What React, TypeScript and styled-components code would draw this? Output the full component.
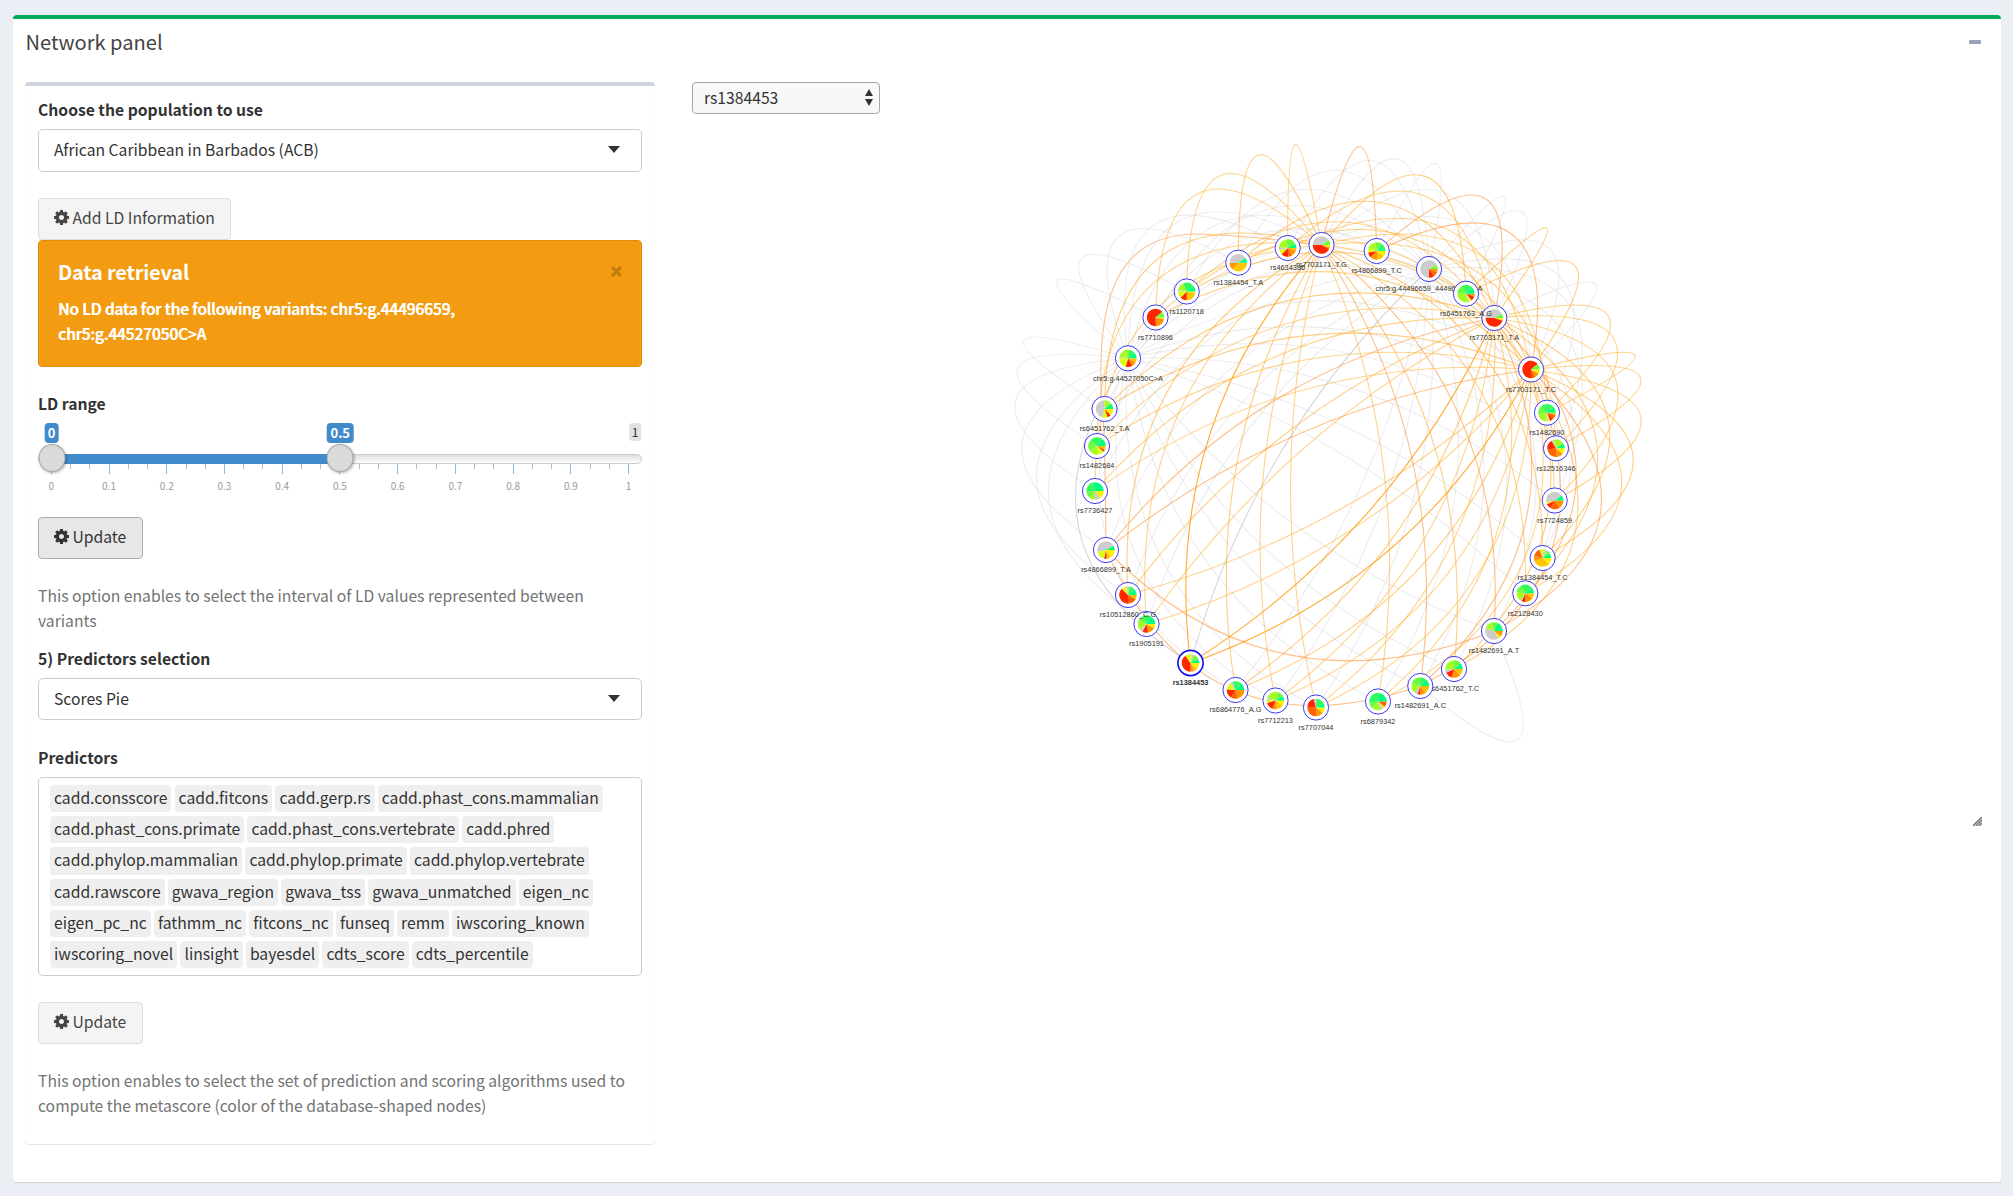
import React from "react";
import styled, { createGlobalStyle } from "styled-components";

const GlobalStyle = createGlobalStyle`
  *, *::before, *::after { box-sizing: border-box; }
  body {
    margin: 0;
    background: #ebeef4;
    color: #333;
    font-family: "Noto Sans CJK SC", "Noto Sans", sans-serif;
    font-size: 15.7px;
    line-height: 25px;
  }
`;

const Page = styled.main`
  height: 1196px;
  padding: 15px 12px 14px 13px;
`;

const Box = styled.section`
  height: 1167px;
  background: #fff;
  border-top: 4px solid #00a95c;
  border-radius: 4px;
  box-shadow: 0 1px 1px rgba(0, 0, 0, 0.12);
`;

const BoxHeader = styled.header`
  display: flex;
  justify-content: space-between;
  height: 63px;
  padding: 10px 20px 0 12.5px;
`;

const BoxTitle = styled.h3`
  margin: 0;
  font-size: 20.1px;
  font-weight: 400;
  line-height: 26px;
  color: #444;
`;

const CollapseMark = styled.span`
  width: 12px;
  height: 4px;
  margin-top: 11px;
  border-radius: 1px;
  background: #9aa1b9;
`;

const BoxBody = styled.div`
  display: flex;
  gap: 37px;
  padding: 0 19px 0 12px;
`;

const Sidebar = styled.aside`
  width: 630px;
  height: 1062px;
  padding: 11px 13px 0;
  border-top: 4px solid #d1d5df;
  border-radius: 4px;
  box-shadow: 0 1px 1px rgba(0, 0, 0, 0.1), 0 0 1px rgba(0, 0, 0, 0.08);
`;

const FieldLabel = styled.label<{ $top?: number }>`
  display: block;
  height: 25px;
  margin-top: ${(p) => p.$top ?? 0}px;
  font-weight: 700;
`;

const SelectBox = styled.div<{ $height?: number }>`
  display: flex;
  align-items: center;
  justify-content: space-between;
  height: ${(p) => p.$height ?? 43}px;
  margin-top: 7px;
  padding: 0 21px 2px 15px;
  border: 1px solid #ccc;
  border-radius: 5px;
`;

const Caret = styled.span`
  border: solid transparent;
  border-width: 7px 6.5px 0;
  border-top-color: #333;
`;

const Button = styled.button<{ $top: number; $pressed?: boolean }>`
  display: flex;
  align-items: center;
  gap: 3.5px;
  height: 42px;
  margin: ${(p) => p.$top}px 0 0;
  padding: 0 15.5px 3px 15px;
  border: 1px solid ${(p) => (p.$pressed ? "#adadad" : "#ddd")};
  border-radius: 4px;
  background: ${(p) => (p.$pressed ? "#e7e7e7" : "#f4f4f4")};
  color: ${(p) => (p.$pressed ? "#333" : "#444")};
  font: inherit;
`;

const Alert = styled.div`
  height: 127px;
  padding: 17px 18px 17px 19px;
  border: 1px solid #e08e0b;
  border-radius: 4px;
  background: #f39c12;
  color: #fff;
`;

const AlertHead = styled.div`
  display: flex;
  justify-content: space-between;
  height: 38px;
`;

const AlertTitle = styled.h4`
  margin: 0;
  font-size: 20px;
  font-weight: 700;
  line-height: 28px;
  letter-spacing: -0.2px;
`;

const AlertText = styled.p`
  margin: 0;
  width: 430px;
  font-weight: 500;
  font-size: 15.6px;
  letter-spacing: -0.17px;
  text-shadow: 0.5px 0 #fff;
`;

const Slider = styled.div`
  position: relative;
  height: 76px;
  margin-top: 7px;
`;

const SliderTrack = styled.div`
  position: absolute;
  top: 31px;
  left: 0;
  right: 0;
  height: 10px;
  border: 1px solid #ccc;
  border-radius: 6px;
  background: linear-gradient(#dedede, #fff);
`;

const SliderBar = styled.div`
  position: absolute;
  top: 31px;
  left: 13px;
  width: 289px;
  height: 10px;
  background: #428bca;
`;

const SliderHandle = styled.span`
  position: absolute;
  top: 21px;
  width: 27px;
  height: 28px;
  transform: translateX(-50%);
  border: 1px solid #aaa;
  border-radius: 50%;
  background: #dadada;
  box-shadow: 1px 1px 3px rgba(0, 0, 0, 0.3);
`;

const SliderValue = styled.span<{ $muted?: boolean }>`
  position: absolute;
  top: 0;
  height: ${(p) => (p.$muted ? 18 : 20)}px;
  padding: 0 ${(p) => (p.$muted ? 2.5 : 3.5)}px;
  transform: translateX(-50%);
  border-radius: 4px;
  background: ${(p) => (p.$muted ? "#e1e1e1" : "#428bca")};
  color: ${(p) => (p.$muted ? "#333" : "#fff")};
  font-size: ${(p) => (p.$muted ? 12 : 13)}px;
  font-weight: ${(p) => (p.$muted ? 400 : 700)};
  line-height: ${(p) => (p.$muted ? 18 : 20)}px;
`;

const Tick = styled.span<{ $major: boolean }>`
  position: absolute;
  top: 41px;
  width: 1px;
  height: ${(p) => (p.$major ? 10 : 5)}px;
  background: ${(p) => (p.$major ? "#8db9de" : "#bbb")};
`;

const TickText = styled.span`
  position: absolute;
  top: 56px;
  transform: translateX(-50%);
  color: #999;
  font-size: 10px;
  line-height: 14px;
`;

const Help = styled.p<{ $top: number }>`
  margin: ${(p) => p.$top}px 0 0;
  color: #737373;
`;

const Tags = styled.div`
  display: flex;
  flex-wrap: wrap;
  align-content: flex-start;
  gap: 4px 3.2px;
  height: 199px;
  margin-top: 7px;
  padding: 7px 11px;
  border: 1px solid #ccc;
  border-radius: 5px;
`;

const Tag = styled.span`
  height: 27.2px;
  padding: 0 4px;
  border-radius: 4px;
  background: #efefef;
  line-height: 26px;
`;

const Network = styled.div`
  flex: 1;
  display: flex;
  flex-direction: column;
`;

const NativeSelect = styled.div`
  display: flex;
  align-items: center;
  justify-content: space-between;
  width: 188px;
  height: 32px;
  padding: 0 6px 1px 11px;
  border: 1px solid #a6a6a6;
  border-radius: 4px;
  background: #f8f8f8;
`;

const Canvas = styled.div`
  display: flex;
  align-items: flex-end;
  width: 1290px;
  height: 712px;
`;

const Graph = styled.svg`
  flex: none;
  width: 1281px;
  height: 712px;
  font-family: "Liberation Sans", Arial, sans-serif;
`;

const CrossIcon = styled.svg`
  margin-top: 7px;
`;

const COG =
  "M1024 896q0 106-75 181t-181 75-181-75-75-181 75-181 181-75 181 75 75 181zm512-109v222q0 12-8 23t-20 13l-185 28q-19 54-39 91 35 50 107 138 10 12 10 25t-9 23q-27 37-99 108t-94 71q-12 0-26-9l-138-108q-44 23-91 38-16 136-29 186-7 28-36 28h-222q-14 0-24.5-8.5t-11.5-21.5l-28-184q-49-16-90-37l-141 107q-10 9-25 9-14 0-25-11-126-114-165-168-7-10-7-23 0-12 8-23 15-21 51-66.5t54-70.5q-27-50-41-99l-183-27q-13-2-21-12.5t-8-23.5v-222q0-12 8-23t19-13l186-28q14-46 39-92-40-57-107-138-10-12-10-24 0-10 9-23 26-36 98.5-107.5t94.5-71.5q13 0 26 10l138 107q44-23 91-38 16-136 29-186 7-28 36-28h222q14 0 24.5 8.5t11.5 21.5l28 184q49 16 90 37l142-107q9-9 24-9 13 0 25 10 129 119 165 170 7 8 7 22 0 12-8 23-15 21-51 66.5t-54 70.5q26 50 41 98l183 28q13 2 21 12.5t8 23.5z";

const Cog = () => (
  <svg width="15" height="15" viewBox="0 128 1536 1536" fill="currentColor" fillRule="evenodd">
    <path d={COG} />
  </svg>
);

const Cross = () => (
  <CrossIcon width="13" height="13" viewBox="0 0 12 12">
    <path d="M2 1.8l8 8.4M10 1.8l-8 8.4" stroke="#c27d0e" strokeWidth="3" />
  </CrossIcon>
);

/* Pie slices run clockwise from three o'clock; each letter is a colour, each number degrees. */
const PALETTE: Record<string, string> = {
  y: "#ffee00",
  a: "#ffc400",
  o: "#ff9500",
  d: "#ff6200",
  r: "#ff2600",
  x: "#cccccc",
  Y: "#d8ff14",
  l: "#a4fb26",
  g: "#6dfc3d",
  G: "#33fb5c",
  e: "#00ff80",
};

type GraphNode = { id: string; x: number; y: number; pie: string };

const nodes: GraphNode[] = [
  { id: "rs4634386", x: 1287.7, y: 248, pie: "a15 o45 d25 r50 Y30 x20 l75 g70 e30" },
  { id: "rs7703171_T.G", x: 1321.5, y: 245, pie: "y15 o15 r150 x145 g35" },
  { id: "rs4866899_T.C", x: 1376.7, y: 251, pie: "y40 a45 o50 r35 Y30 l60 g40 G45 e15" },
  { id: "chr5:g.44496659_44496660C>A", x: 1429, y: 269, pie: "o20 d35 r37 x238 g30" },
  { id: "rs7703171_T.A", x: 1494.3, y: 318, pie: "y18 r162 x150 g30" },
  { id: "rs6451763_A.G", x: 1466, y: 293.7, pie: "o20 r30 Y20 x10 l100 g60 G75 e45" },
  { id: "rs7703171_T.C", x: 1531, y: 369.5, pie: "y30 o30 d30 r230 g40" },
  { id: "rs1482690", x: 1547, y: 412.7, pie: "a15 d30 r25 Y15 x10 l75 g55 G95 e40" },
  { id: "rs12516346", x: 1556, y: 448.3, pie: "y40 o45 d85 r70 x12 l75 e33" },
  { id: "rs7724859", x: 1554.7, y: 500.5, pie: "o55 d65 r35 Y15 x155 e35" },
  { id: "rs1384454_T.C", x: 1542.6, y: 558, pie: "y45 a115 o35 d55 Y30 x25 g25 e30" },
  { id: "rs2128430", x: 1525.3, y: 593.3, pie: "a35 o55 r25 x8 l67 g50 G85 e35" },
  { id: "rs1482691_A.T", x: 1494, y: 631, pie: "o40 y20 x140 l55 g40 e65" },
  { id: "rs6451762_T.C", x: 1454, y: 669, pie: "a45 o60 r50 x20 l95 g50 e40" },
  { id: "rs1482691_A.C", x: 1420.3, y: 686, pie: "a50 o40 r18 x22 l65 g75 G45 e45" },
  { id: "rs6879342", x: 1378, y: 701.5, pie: "d40 y12 x20 l60 g38 G110 e80" },
  { id: "rs7707044", x: 1316, y: 707.5, pie: "y40 o50 d95 r70 x18 G60 e27" },
  { id: "rs7712213", x: 1275.5, y: 700.5, pie: "y35 a45 o30 r55 Y20 x12 l88 g45 e30" },
  { id: "rs6864776_A.G", x: 1235.5, y: 690, pie: "o75 d45 r65 Y45 x20 G60 e50" },
  { id: "rs1384453", x: 1190.5, y: 663, pie: "y40 a25 o25 r145 Y45 x15 g35 e30" },
  { id: "rs1905191", x: 1146.5, y: 624, pie: "y30 o50 r38 x22 l60 g40 G60 e60" },
  { id: "rs10512860_C.G", x: 1128, y: 595, pie: "a30 d60 r135 Y35 x20 G40 e40" },
  { id: "rs4866899_T.A", x: 1106, y: 550, pie: "y60 a25 r18 Y65 x162 e30" },
  { id: "rs7736427", x: 1095, y: 491, pie: "y55 x35 l40 g45 G80 e105" },
  { id: "rs1482684", x: 1097, y: 446, pie: "a28 r14 Y48 l55 g75 G85 e55" },
  { id: "rs6451762_T.A", x: 1104.5, y: 409, pie: "y45 r25 Y35 x165 l50 e40" },
  { id: "chr5:g.44527050C>A", x: 1128, y: 358.3, pie: "a30 o30 r45 Y75 x10 l85 G45 e40" },
  { id: "rs7710896", x: 1155.5, y: 317.5, pie: "y12 o75 r233 g40" },
  { id: "rs1120718", x: 1186.7, y: 291.5, pie: "y15 a75 r45 Y45 x10 l55 G75 e40" },
  { id: "rs1384454_T.A", x: 1238.3, y: 262.7, pie: "a130 o50 x148 e32" },
];

const byId = Object.fromEntries(nodes.map((n) => [n.id, n]));
const variant = (id: string) => id.split("_")[0];
const isChr = (id: string) => id.startsWith("chr");
const SELECTED = "rs1384453";
const ldHubs = ["rs7703171_T.G", "rs7703171_T.A", "rs7703171_T.C"];
const chrHubs = nodes.filter((n) => isChr(n.id)).map((n) => n.id);
const strong = /^rs(4866899|1482691)/;

type Edge = { a: GraphNode; b: GraphNode; color: string; opacity: number; path?: string };

const edges: Edge[] = [];
const seen = new Set<string>();

function link(a: string, b: string, path?: string) {
  const key = [a, b].sort().join("|");
  if (a === b || seen.has(key)) return;
  seen.add(key);
  const focus = a === SELECTED || b === SELECTED;
  const grey = isChr(a) || isChr(b) || variant(a) === variant(b);
  let color = "#ffa51e";
  if (strong.test(a) || strong.test(b)) color = "#ff8c28";
  else if (a.length + b.length < 24) color = "#ffb02d";
  if (focus) color = "#ff9c0a";
  if (grey) color = focus ? "#bdbdbd" : "#d6d6d6";
  edges.push({ a: byId[a], b: byId[b], color, path, opacity: grey ? (focus ? 0.6 : 0.45) : focus ? 0.85 : 0.55 });
}

link(
  "rs4866899_T.A",
  "rs7703171_T.G",
  "M1106 550Q1105.5 480 1104 430C1090 290 1120 225 1215 235C1250 236 1290 241 1321 245"
);
chrHubs.forEach((h) => nodes.forEach((n) => link(h, n.id)));
ldHubs.forEach((h) => nodes.forEach((n) => link(h, n.id)));
link("rs4866899_T.A", "rs1482691_A.T");
link("rs4866899_T.A", "rs1482691_A.C");
link("rs1482691_A.T", "rs1482691_A.C");

const CENTER = { x: 1325, y: 475 };

/* Every edge bows away from the centre of the ring, more so near the rim. */
function edgePath({ a, b, path }: Edge) {
  if (path) return path;
  const mx = (a.x + b.x) / 2;
  const my = (a.y + b.y) / 2;
  const ox = mx - CENTER.x;
  const oy = my - CENTER.y;
  const len = Math.hypot(b.x - a.x, b.y - a.y);
  let px = -(b.y - a.y) / len;
  let py = (b.x - a.x) / len;
  if (px * ox + py * oy < 0) {
    px = -px;
    py = -py;
  }
  const d = 52 + 0.665 * Math.hypot(ox, oy);
  return `M${a.x} ${a.y}Q${mx + px * d} ${my + py * d} ${b.x} ${b.y}`;
}

const PIE_RADIUS = 8.7;

function slices(pie: string) {
  const parts = pie.split(" ").map((p) => ({ fill: PALETTE[p[0]], size: Number(p.slice(1)) }));
  const total = parts.reduce((s, p) => s + p.size, 0);
  let angle = 0;
  return parts.map((p) => {
    const from = angle;
    angle += (p.size / total) * Math.PI * 2;
    const large = angle - from > Math.PI ? 1 : 0;
    const pt = (t: number) => `${PIE_RADIUS * Math.cos(t)} ${PIE_RADIUS * Math.sin(t)}`;
    return { fill: p.fill, d: `M0 0L${pt(from)}A${PIE_RADIUS} ${PIE_RADIUS} 0 ${large} 1 ${pt(angle)}Z` };
  });
}

const drawOrder = [...nodes].sort((p, q) => {
  const rank = (id: string) =>
    id === "rs10512860_C.G" || id === "rs6451763_A.G" || id === "rs1482691_A.C" ? 1 : 0;
  return rank(p.id) - rank(q.id);
});

const NetworkGraph = () => (
  <Graph viewBox="692 114 1281 712">
    <g fill="none" strokeWidth="1.1">
      {edges.map((e) => (
        <path key={e.a.id + e.b.id} d={edgePath(e)} stroke={e.color} strokeOpacity={e.opacity} />
      ))}
    </g>
    {drawOrder.map((n) => {
      const selected = n.id === SELECTED;
      return (
        <g key={n.id} transform={`translate(${n.x} ${n.y})`}>
          <circle
            r="12.6"
            fill="#fff"
            stroke={selected ? "#1010f0" : "#3a3af2"}
            strokeWidth={selected ? 1.6 : 1}
          />
          {slices(n.pie).map((s, i) => (
            <path key={i} d={s.d} fill={s.fill} />
          ))}
          <text
            y="22.3"
            textAnchor="middle"
            fontSize="7.4"
            fontWeight={selected ? 700 : 400}
            fill="#333"
          >
            {n.id}
          </text>
        </g>
      );
    })}
  </Graph>
);

const predictors = [
  "cadd.consscore", "cadd.fitcons", "cadd.gerp.rs", "cadd.phast_cons.mammalian",
  "cadd.phast_cons.primate", "cadd.phast_cons.vertebrate", "cadd.phred",
  "cadd.phylop.mammalian", "cadd.phylop.primate", "cadd.phylop.vertebrate",
  "cadd.rawscore", "gwava_region", "gwava_tss", "gwava_unmatched", "eigen_nc",
  "eigen_pc_nc", "fathmm_nc", "fitcons_nc", "funseq", "remm", "iwscoring_known",
  "iwscoring_novel", "linsight", "bayesdel", "cdts_score", "cdts_percentile",
];

const tickX = (v: number) => 13.3 + v * 577.3;

const RangeSlider = () => (
  <Slider>
    <SliderTrack />
    <SliderBar />
    {Array.from({ length: 31 }, (_, i) => (
      <Tick key={i} $major={i % 3 === 0} style={{ left: tickX(i / 30) - 0.5 }} />
    ))}
    {Array.from({ length: 11 }, (_, i) => (
      <TickText key={i} style={{ left: tickX(i / 10) }}>
        {i / 10}
      </TickText>
    ))}
    <SliderValue $muted style={{ left: 597 }}>1</SliderValue>
    {[0, 0.5].map((v) => (
      <React.Fragment key={v}>
        <SliderValue style={{ left: tickX(v) + 0.3 }}>{v}</SliderValue>
        <SliderHandle style={{ left: tickX(v) + 0.3 }} />
      </React.Fragment>
    ))}
  </Slider>
);

export default function App() {
  return (
    <>
      <GlobalStyle />
      <Page>
        <Box>
          <BoxHeader>
            <BoxTitle>Network panel</BoxTitle>
            <CollapseMark />
          </BoxHeader>
          <BoxBody>
            <Sidebar>
              <FieldLabel>Choose the population to use</FieldLabel>
              <SelectBox>
                African Caribbean in Barbados (ACB)
                <Caret />
              </SelectBox>
              <Button $top={26}>
                <Cog />
                Add LD Information
              </Button>
              <Alert>
                <AlertHead>
                  <AlertTitle>Data retrieval</AlertTitle>
                  <Cross />
                </AlertHead>
                <AlertText>
                  No LD data for the following variants: chr5:g.44496659, chr5:g.44527050C&gt;A
                </AlertText>
              </Alert>
              <FieldLabel $top={24}>LD range</FieldLabel>
              <RangeSlider />
              <Button $top={18} $pressed>
                <Cog />
                Update
              </Button>
              <Help $top={24}>
                This option enables to select the interval of LD values represented between variants
              </Help>
              <FieldLabel $top={13}>5) Predictors selection</FieldLabel>
              <SelectBox $height={42}>
                Scores Pie
                <Caret />
              </SelectBox>
              <FieldLabel $top={25}>Predictors</FieldLabel>
              <Tags>
                {predictors.map((p) => (
                  <Tag key={p}>{p}</Tag>
                ))}
              </Tags>
              <Button $top={26}>
                <Cog />
                Update
              </Button>
              <Help $top={24}>
                This option enables to select the set of prediction and scoring algorithms used to
                compute the metascore (color of the database-shaped nodes)
              </Help>
            </Sidebar>
            <Network>
              <NativeSelect>
                rs1384453
                <svg width="8" height="17" viewBox="0 0 8 17" fill="#333">
                  <path d="M4 0l4 7H0zM4 17l4-7H0z" />
                </svg>
              </NativeSelect>
              <Canvas>
                <NetworkGraph />
                <svg width="9" height="9" viewBox="0 0 9 9" stroke="#777">
                  <path d="M0 9L9 0M3 9L9 3M6 9L9 6" strokeWidth="1.6" />
                </svg>
              </Canvas>
            </Network>
          </BoxBody>
        </Box>
      </Page>
    </>
  );
}
